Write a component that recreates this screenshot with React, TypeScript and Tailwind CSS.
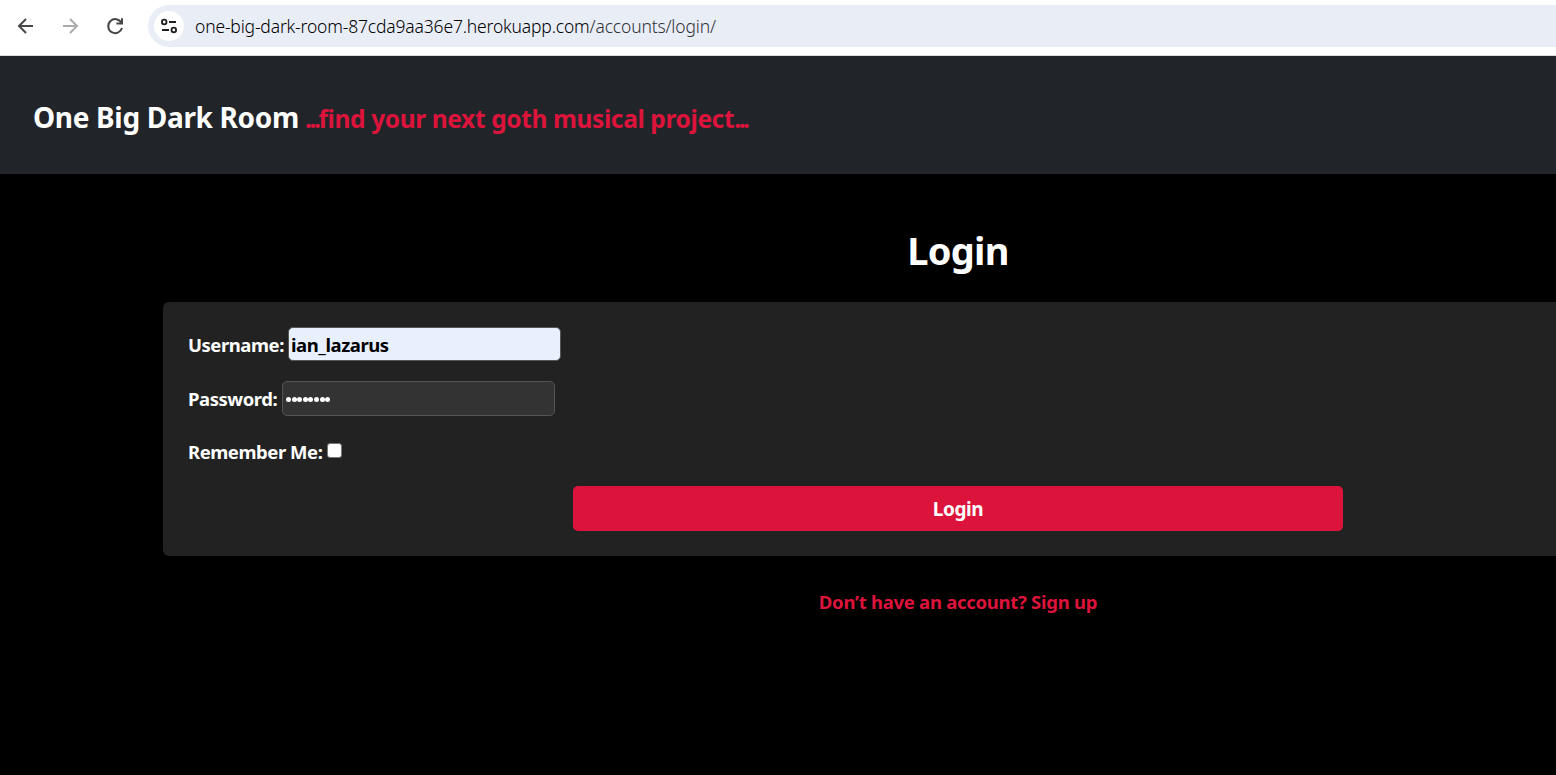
function Toolbar() {
  return (
    <div className="flex h-[56px] items-start border-b border-[#dcdcdc] bg-white">
      <svg className="mt-[14px] ml-[14px] h-6 w-6 shrink-0" viewBox="0 0 24 24" fill="none" stroke="#474747" strokeWidth="2">
        <path d="M19 12H5.5M12 5L5 12l7 7" />
      </svg>
      <svg className="mt-[14px] ml-[20px] h-6 w-6 shrink-0" viewBox="0 0 24 24" fill="none" stroke="#ababab" strokeWidth="2">
        <path d="M5 12h13.5M12 5l7 7-7 7" />
      </svg>
      <svg className="mt-[14px] ml-[21px] h-6 w-6 shrink-0" viewBox="0 0 24 24" fill="none" stroke="#474747" strokeWidth="2">
        <path d="M18.3 8.6A7 7 0 1 0 19 14M19 4.2V9.5h-5.6" />
      </svg>
      <div className="mt-[5px] ml-[21px] flex h-[42px] grow items-center rounded-l-full bg-[#e9edf6] pl-[6px]">
        <div className="flex h-[30px] w-[30px] shrink-0 items-center justify-center rounded-full bg-white">
          <svg className="h-[20px] w-[20px]" viewBox="0 0 20 20" fill="none" stroke="#1f1f1f" strokeWidth="1.8">
            <circle cx="5.2" cy="6" r="2.3" />
            <path d="M10 6h7M3 14h7" />
            <circle cx="14.8" cy="14" r="2.3" />
          </svg>
        </div>
        <span className="mt-[1px] ml-[11px] text-[17.5px] font-light tracking-[-0.17px] whitespace-nowrap text-black">
          one-big-dark-room-87cda9aa36e7.herokuapp.com<span className="text-[#303136]">/accounts/login/</span>
        </span>
      </div>
    </div>
  );
}

function SiteHeader() {
  return (
    <header className="flex h-[118px] items-baseline bg-[#212529] pt-[40px] pl-[33px] leading-[42px] font-bold whitespace-nowrap">
      <span className="w-[272px] text-[28px] tracking-[-0.32px] text-white">One Big Dark Room</span>
      <span className="text-[24.5px] tracking-[-0.38px] text-[#dc143c]">
        <span className="tracking-[-2.4px]">...</span>find your next goth musical project<span className="tracking-[-2.4px]">...</span>
      </span>
    </header>
  );
}

function LoginForm() {
  return (
    <form className="flex h-[254px] w-[1590px] shrink-0 flex-col rounded-[6px] bg-[#222222] pt-[25px] pl-[25px] text-[18.5px] font-bold tracking-[-0.45px] text-white">
      <div className="flex h-[34px] items-center">
        <label className="w-[100px] pt-[2px] whitespace-nowrap">Username:</label>
        <div className="flex h-[34px] w-[273px] items-center rounded-[5px] border border-[#555555] bg-[#e8f0fe] pt-[2px] pl-[2px] text-black">ian_lazarus</div>
      </div>
      <div className="mt-[20px] flex h-[35px] items-center">
        <label className="w-[94px] whitespace-nowrap">Password:</label>
        <div className="flex h-[35px] w-[273px] items-center gap-[0.6px] rounded-[5px] border border-[#555555] bg-[#333333] pt-[2px] pl-[3px]">
          {[0, 1, 2, 3, 4, 5, 6, 7].map((n) => (
            <span key={n} className="h-[5px] w-[5px] rounded-full bg-white" />
          ))}
        </div>
      </div>
      <div className="mt-[20px] flex h-[34px] items-center">
        <label className="mb-[2px] w-[139px] whitespace-nowrap">Remember Me:</label>
        <span className="mb-[6px] h-[15px] w-[15px] rounded-[3px] border border-[#767676] bg-white" />
      </div>
      <button type="button" className="mt-[16px] ml-[385px] h-[45px] w-[770px] rounded-[5px] bg-[#dc143c] pt-[2px] text-[19px] tracking-[-0.4px]">Login</button>
    </form>
  );
}

export default function App() {
  return (
    <div className="h-[775px] w-[1556px] overflow-hidden bg-black font-['Noto_Sans','Open_Sans',sans-serif]">
      <Toolbar />
      <SiteHeader />
      <main className="flex w-[1590px] flex-col pl-[163px]">
        <h1 className="mt-[47px] h-[58px] w-[1590px] text-center text-[38px] leading-[58px] font-bold tracking-[-0.75px] text-white">Login</h1>
        <div className="mt-[23px]">
          <LoginForm />
        </div>
        <p className="mt-[31px] w-[1590px] text-center text-[18.5px] leading-[30px] font-bold tracking-[-0.28px] text-[#dc143c]">Don’t have an account? Sign up</p>
      </main>
    </div>
  );
}
